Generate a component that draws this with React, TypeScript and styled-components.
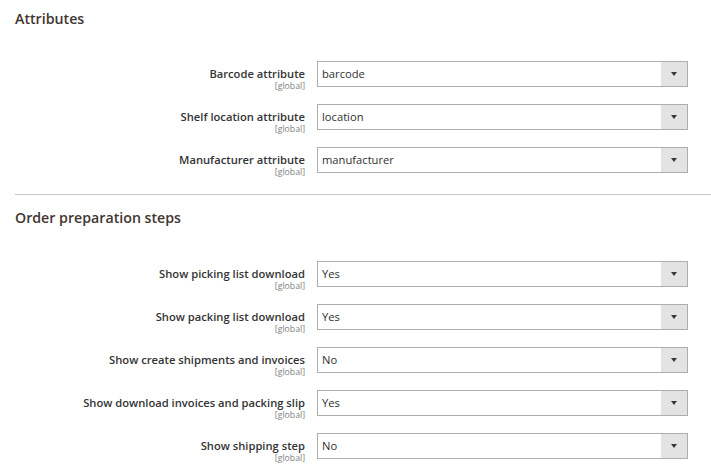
import React from "react";
import styled, { createGlobalStyle } from "styled-components";

const GlobalStyle = createGlobalStyle`
  html, body {
    margin: 0;
    padding: 0;
    background: #ffffff;
  }
  body {
    font-family: "Open Sans", "Liberation Sans", sans-serif;
    color: #303030;
  }
`;

interface Field {
  label: string;
  value: string;
}

const attributes: Field[] = [
  { label: "Barcode attribute", value: "barcode" },
  { label: "Shelf location attribute", value: "location" },
  { label: "Manufacturer attribute", value: "manufacturer" },
];

const steps: Field[] = [
  { label: "Show picking list download", value: "Yes" },
  { label: "Show packing list download", value: "Yes" },
  { label: "Show create shipments and invoices", value: "No" },
  { label: "Show download invoices and packing slip", value: "Yes" },
  { label: "Show shipping step", value: "No" },
];

const Page = styled.div`
  padding: 9px 0 0 15px;
`;

const Section = styled.section<{ $divider?: boolean }>`
  padding-top: ${(p) => (p.$divider ? "13px" : "0")};
  border-top: ${(p) => (p.$divider ? "1px solid #c6c6c6" : "none")};
`;

const Title = styled.h3<{ $gap: number }>`
  margin: 0 0 ${(p) => p.$gap}px;
  font-size: 14.2px;
  line-height: 20px;
  font-weight: 600;
  color: #41362f;
`;

const Rows = styled.div`
  display: flex;
  flex-direction: column;
  gap: 13px;
  padding-bottom: 17px;
`;

const Row = styled.div`
  display: grid;
  grid-template-columns: 290px 371px;
  column-gap: 12px;
  align-items: start;
`;

const LabelCell = styled.div`
  display: flex;
  flex-direction: column;
  align-items: flex-end;
  text-align: right;
`;

const LabelText = styled.label`
  font-size: 11.2px;
  line-height: 26px;
  font-weight: 600;
  color: #333333;
  white-space: nowrap;
`;

const Scope = styled.span`
  margin-top: -6px;
  font-size: 8.7px;
  line-height: 10px;
  color: #808080;
`;

const Select = styled.div`
  display: flex;
  height: 26px;
  box-sizing: border-box;
  border: 1px solid #adadad;
  background: #ffffff;
`;

const Value = styled.span`
  flex: 1;
  padding-left: 4px;
  font-size: 11.2px;
  line-height: 24px;
  color: #303030;
`;

const Arrow = styled.span`
  width: 26px;
  display: flex;
  align-items: center;
  justify-content: center;
  background: #e3e3e3;
  &::after {
    content: "";
    border-left: 3px solid transparent;
    border-right: 3px solid transparent;
    border-top: 4px solid #41362f;
    margin-left: -1px;
  }
`;

const FieldRow = ({ label, value }: Field) => (
  <Row>
    <LabelCell>
      <LabelText>{label}</LabelText>
      <Scope>[global]</Scope>
    </LabelCell>
    <Select>
      <Value>{value}</Value>
      <Arrow />
    </Select>
  </Row>
);

export default function App() {
  return (
    <>
      <GlobalStyle />
      <Page>
        <Section>
          <Title $gap={32}>Attributes</Title>
          <Rows>
            {attributes.map((f) => (
              <FieldRow key={f.label} {...f} />
            ))}
          </Rows>
        </Section>
        <Section $divider>
          <Title $gap={33}>Order preparation steps</Title>
          <Rows>
            {steps.map((f) => (
              <FieldRow key={f.label} {...f} />
            ))}
          </Rows>
        </Section>
      </Page>
    </>
  );
}
